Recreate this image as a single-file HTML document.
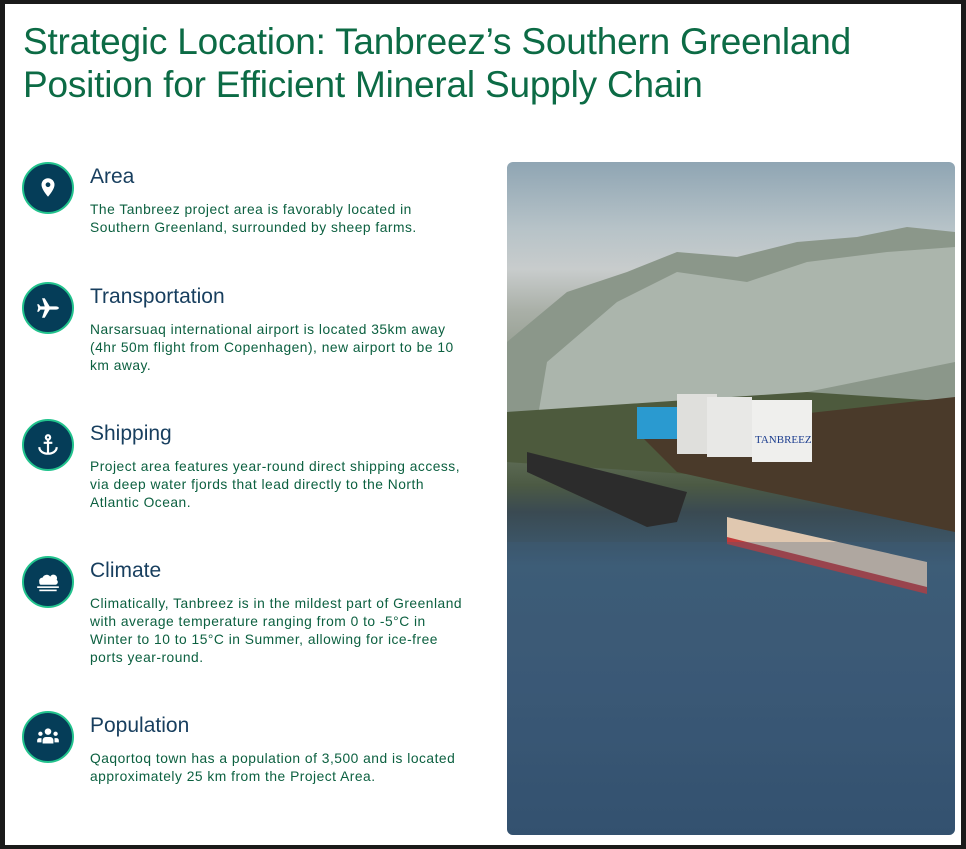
<!DOCTYPE html>
<html><head><style>
body{margin:0;width:966px;height:849px;overflow:hidden;background:#1a1a1a;font-family:"Liberation Sans",sans-serif}
.pg{position:absolute;left:5px;top:4px;width:956px;height:841px;background:#fff}
h1{position:absolute;left:18px;top:16px;margin:0;font-weight:400;font-size:37px;line-height:43px;color:#0c6b45;letter-spacing:-0.2px}
.ic{position:absolute;left:17px;width:52px;height:52px;border-radius:50%;background:#053d58;border:2px solid #22c38d;box-sizing:border-box}
.ic svg{position:absolute;left:11px;top:11px}
.h{position:absolute;left:85px;font-size:21px;color:#173e5e;white-space:nowrap}
.p{position:absolute;left:85px;width:378px;font-size:13.8px;letter-spacing:0.5px;line-height:18px;color:#0c6040}
.img{position:absolute;left:502px;top:158px;width:448px;height:673px;border-radius:6px;overflow:hidden;
background:linear-gradient(180deg,#8fa5b3 0%,#b7c3c8 10%,#c8cccc 16%,#aab0a8 22%,#6f7d66 40%,#4c5a44 48%,#3a4a52 52%,#3d5d76 60%,#3a5875 75%,#2f4d6b 100%)}
</style></head><body><div class="pg">
<h1>Strategic Location: Tanbreez’s Southern Greenland<br>Position for Efficient Mineral Supply Chain</h1>

<div class="ic" style="top:158px"><svg width="26" height="26" viewBox="0 0 24 24"><path d="M12 3a6 6 0 0 0-6 6c0 4.5 6 11 6 11s6-6.5 6-11a6 6 0 0 0-6-6z" fill="#fff"/><circle cx="12" cy="9" r="2.2" fill="#053d58"/></svg></div>
<div class="h" style="top:161px">Area</div>
<div class="p" style="top:197px">The Tanbreez project area is favorably located in Southern Greenland, surrounded by sheep farms.</div>

<div class="ic" style="top:278px"><svg width="26" height="26" viewBox="0 0 24 24"><path d="M22 12c0-1-1.5-1.5-3-1.5h-5.5L9 3H6.5l2.5 7.5H5L3.5 8.5H2L3 12l-1 3.5h1.5L5 13.5h4l-2.5 7.5H9l4.5-7.5H19c1.5 0 3-.5 3-1.5z" fill="#fff"/></svg></div>
<div class="h" style="top:281px">Transportation</div>
<div class="p" style="top:317px">Narsarsuaq international airport is located 35km away (4hr 50m flight from Copenhagen), new airport to be 10 km away.</div>

<div class="ic" style="top:415px"><svg width="26" height="26" viewBox="0 0 24 24" fill="none" stroke="#fff" stroke-width="2"><circle cx="12" cy="5" r="2"/><path d="M12 7v13M8 10h8M4 14c0 4 4 6 8 6s8-2 8-6"/></svg></div>
<div class="h" style="top:418px">Shipping</div>
<div class="p" style="top:454px">Project area features year-round direct shipping access, via deep water fjords that lead directly to the North Atlantic Ocean.</div>

<div class="ic" style="top:552px"><svg width="26" height="26" viewBox="0 0 24 24" fill="#fff"><path d="M4 12a3 3 0 0 1 3-4 4 4 0 0 1 7-1 3 3 0 0 1 6 3 2.5 2.5 0 0 1-1 4.5H5a2.5 2.5 0 0 1-1-2.5z"/><rect x="2" y="16" width="20" height="1.5"/><rect x="4" y="19" width="16" height="1.5"/></svg></div>
<div class="h" style="top:555px">Climate</div>
<div class="p" style="top:591px">Climatically, Tanbreez is in the mildest part of Greenland with average temperature ranging from 0 to -5°C in Winter to 10 to 15°C in Summer, allowing for ice-free ports year-round.</div>

<div class="ic" style="top:707px"><svg width="26" height="26" viewBox="0 0 24 24" fill="#fff"><circle cx="12" cy="7" r="3"/><circle cx="5" cy="9" r="2"/><circle cx="19" cy="9" r="2"/><path d="M7 18v-3a3 3 0 0 1 3-3h4a3 3 0 0 1 3 3v3z"/><path d="M2 17v-2a2 2 0 0 1 2-2h2v4zM22 17v-2a2 2 0 0 0-2-2h-2v4z"/></svg></div>
<div class="h" style="top:710px">Population</div>
<div class="p" style="top:746px">Qaqortoq town has a population of 3,500 and is located approximately 25 km from the Project Area.</div>

<div class="img"><svg width="448" height="673" viewBox="0 0 448 673">
<path d="M0 180 L60 130 L120 110 L170 90 L230 95 L290 80 L350 75 L400 65 L448 70 L448 330 L0 280Z" fill="#8b978a"/>
<path d="M40 200 L110 140 L170 110 L240 120 L300 100 L380 90 L448 85 L448 200 L300 230 L120 260 L30 260Z" fill="#b9c2bb" opacity=".7"/>
<path d="M0 250 L150 240 L300 230 L448 240 L448 330 L0 300Z" fill="#4d5a3d"/>
<path d="M130 270 L448 235 L448 370 L260 330 L170 310Z" fill="#4a3a2a"/>
<rect x="130" y="245" width="40" height="32" fill="#2a9ad0"/>
<rect x="170" y="232" width="40" height="60" fill="#dfdfdc"/>
<rect x="200" y="235" width="45" height="60" fill="#e8e8e6"/>
<rect x="245" y="238" width="60" height="62" fill="#efefed"/>
<text x="248" y="281" font-family="Liberation Serif,serif" font-size="11" fill="#1d3e8f">TANBREEZ</text>
<path d="M20 290 L180 330 L170 360 L140 365 L20 310Z" fill="#2c2c2c"/>
<path d="M220 355 L420 400 L420 430 L220 380Z" fill="#e0c8b0"/>
<path d="M220 375 L420 425 L420 432 L220 382Z" fill="#c03a3a"/>
<rect x="0" y="380" width="448" height="293" fill="#3e5d7c" opacity=".3"/>
</svg></div>
</div></body></html>
